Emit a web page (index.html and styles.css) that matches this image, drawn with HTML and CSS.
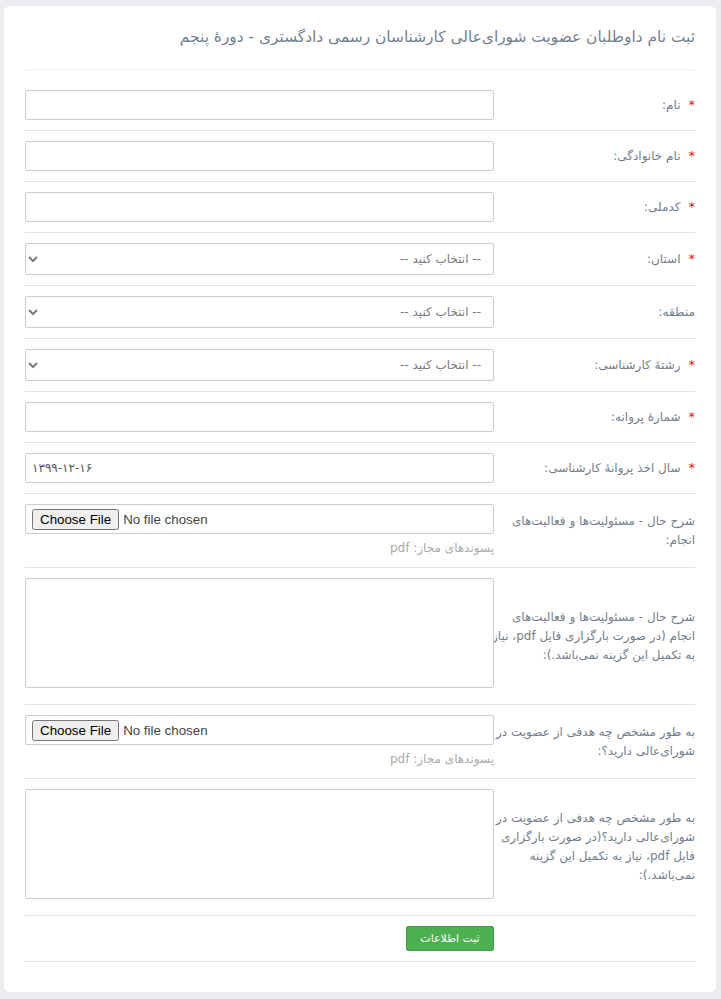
FILE: index.html
```html
<!DOCTYPE html>
<html lang="fa" dir="rtl">
<head>
<meta charset="utf-8">
<title>ثبت نام داوطلبان</title>
<link rel="stylesheet" href="styles.css">
</head>
<body>
<div class="card">
  <h1 class="title">ثبت نام داوطلبان عضویت شورای‌عالی کارشناسان رسمی دادگستری - دورهٔ پنجم</h1>
  <form class="form">
    <div class="row">
      <label class="lbl"><span class="req">*</span>نام:</label>
      <div class="field"><input class="ctl" type="text"></div>
    </div>
    <div class="row">
      <label class="lbl"><span class="req">*</span>نام خانوادگی:</label>
      <div class="field"><input class="ctl" type="text"></div>
    </div>
    <div class="row">
      <label class="lbl"><span class="req">*</span>کدملی:</label>
      <div class="field"><input class="ctl" type="text"></div>
    </div>
    <div class="row">
      <label class="lbl"><span class="req">*</span>استان:</label>
      <div class="field"><select class="ctl sel"><option>-- انتخاب کنید --</option></select></div>
    </div>
    <div class="row">
      <label class="lbl">منطقه:</label>
      <div class="field"><select class="ctl sel"><option>-- انتخاب کنید --</option></select></div>
    </div>
    <div class="row">
      <label class="lbl"><span class="req">*</span>رشتهٔ کارشناسی:</label>
      <div class="field"><select class="ctl sel"><option>-- انتخاب کنید --</option></select></div>
    </div>
    <div class="row">
      <label class="lbl"><span class="req">*</span>شمارهٔ پروانه:</label>
      <div class="field"><input class="ctl" type="text"></div>
    </div>
    <div class="row">
      <label class="lbl"><span class="req">*</span>سال اخذ پروانهٔ کارشناسی:</label>
      <div class="field"><input class="ctl ltr" type="text" value="۱۳۹۹-۱۲-۱۶"></div>
    </div>
    <div class="row">
      <label class="lbl">شرح حال - مسئولیت‌ها و فعالیت‌های انجام:</label>
      <div class="field">
        <input class="ctl file" type="file">
        <div class="hint">پسوندهای مجاز: pdf</div>
      </div>
    </div>
    <div class="row">
      <label class="lbl">شرح حال - مسئولیت‌ها و فعالیت‌های انجام (در صورت بارگزاری فایل pdf، نیاز به تکمیل این گزینه نمی‌باشد.):</label>
      <div class="field"><textarea class="ctl area"></textarea></div>
    </div>
    <div class="row">
      <label class="lbl">به طور مشخص چه هدفی از عضویت در شورای‌عالی دارید؟:</label>
      <div class="field">
        <input class="ctl file" type="file">
        <div class="hint">پسوندهای مجاز: pdf</div>
      </div>
    </div>
    <div class="row">
      <label class="lbl">به طور مشخص چه هدفی از عضویت در شورای‌عالی دارید؟(در صورت بارگزاری فایل pdf، نیاز به تکمیل این گزینه نمی‌باشد.):</label>
      <div class="field"><textarea class="ctl area"></textarea></div>
    </div>
    <div class="row">
      <div class="lbl"></div>
      <div class="field"><button class="btn" type="button">ثبت اطلاعات</button></div>
    </div>
  </form>
</div>
</body>
</html>
```

FILE: styles.css
```css
html, body {
  margin: 0;
  padding: 0;
}
body {
  background: #ebedf1;
  font-family: Tahoma, "DejaVu Sans", sans-serif;
  padding: 6px 5px 8px 4px;
}
.card {
  background: #fff;
  border-radius: 6px;
  padding: 0 21px 30px 21px;
}
.title {
  margin: 0;
  font-weight: normal;
  font-size: 15.4px;
  line-height: 26px;
  padding: 18px 0 19px;
  color: #737f8f;
  border-bottom: 1px solid #eeeeee;
}
.form {
  padding-top: 10px;
}
.row {
  display: flex;
  align-items: center;
  padding: 10px 0;
  border-bottom: 1px solid #e3e3e3;
}
.lbl {
  box-sizing: border-box;
  width: calc(30% + 6px);
  margin-left: -6px;
  flex: none;
  font-size: 12px;
  line-height: 19px;
  color: #737d89;
}
.req {
  color: #e8140c;
  font-size: 13px;
  margin-left: 8px;
}
.field {
  width: 70%;
  flex: none;
}
.ctl {
  display: block;
  box-sizing: border-box;
  width: 100%;
  height: 30px;
  border: 1px solid #cccccc;
  border-radius: 2px;
  padding: 0 6px;
  font-family: Tahoma, "DejaVu Sans", sans-serif;
  font-size: 12px;
  color: #555;
  background: #fff;
  margin: 0;
}
.ltr {
  direction: ltr;
  text-align: left;
}
.sel {
  height: 32px;
  padding: 0 8px;
  color: #7a7a7a;
}
.file {
  direction: ltr;
  text-align: left;
  padding: 4px 6px;
  font-family: "Liberation Sans", Arial, sans-serif;
  font-size: 13.33px;
  color: #444;
}
.area {
  height: 110px;
  margin-bottom: 6px;
  resize: none;
}
.hint {
  margin-top: 5px;
  font-size: 12px;
  line-height: 18px;
  color: #aaaaaa;
}
.btn {
  display: block;
  width: 88px;
  height: 25px;
  background: #4caf50;
  border: 1px solid #43a047;
  border-radius: 2px;
  color: #fff;
  font-family: Tahoma, "DejaVu Sans", sans-serif;
  font-size: 11px;
  padding: 0;
}
```
